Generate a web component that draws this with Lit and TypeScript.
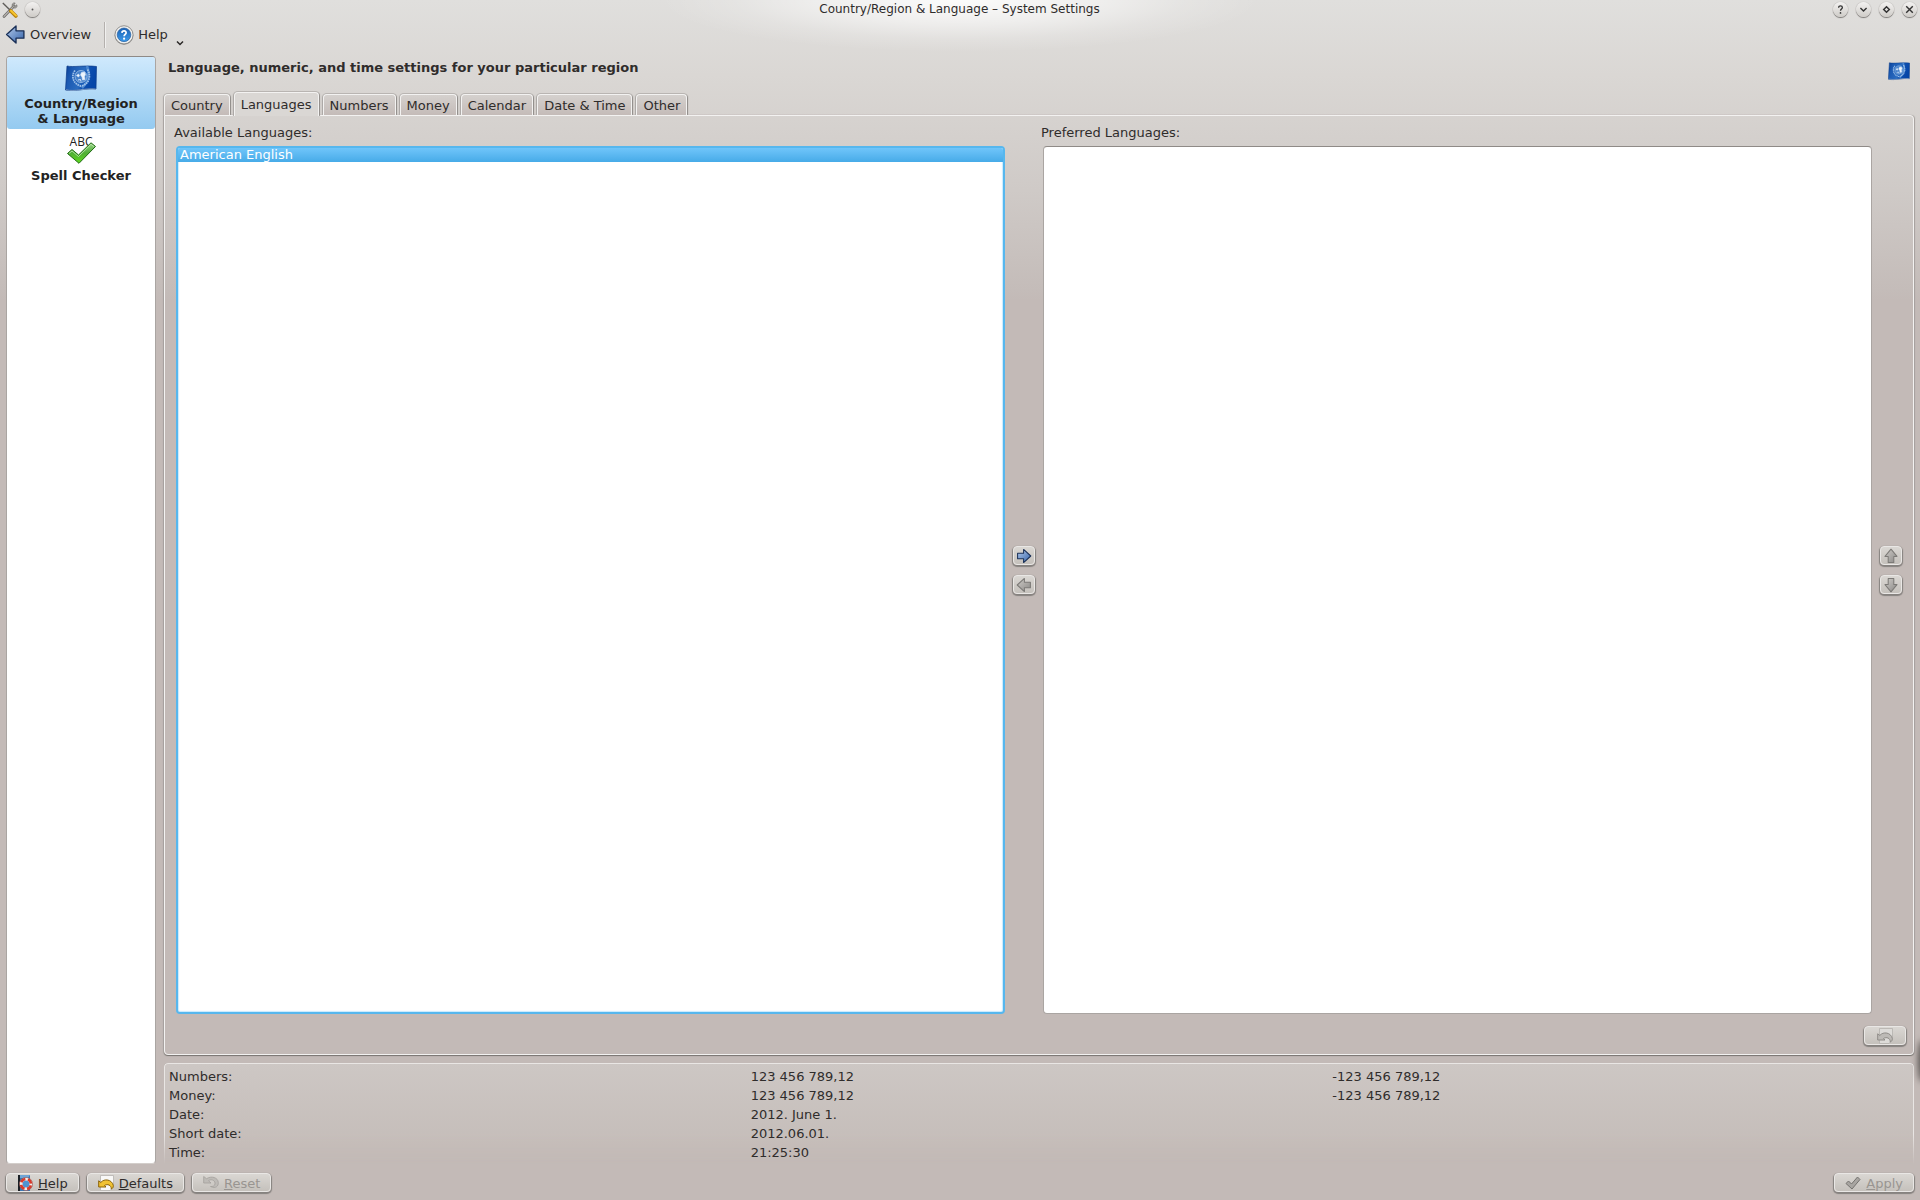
import { LitElement, html, svg, css } from "lit";
import { customElement, property } from "lit/decorators.js";

const flagIcon = (size: number) => html`<svg width=${size} height=${size} viewBox="0 0 32 32" aria-hidden="true">
  <defs>
    <linearGradient id="flag" x1="0" y1="0" x2="1" y2="0.3">
      <stop offset="0" stop-color="#0a3f96" />
      <stop offset=".25" stop-color="#1c5ab2" />
      <stop offset=".6" stop-color="#2a6cc0" />
      <stop offset=".75" stop-color="#0d4fb0" />
      <stop offset="1" stop-color="#0646a8" />
    </linearGradient>
  </defs>
  <path d="M2 4C8 5.500 20 3 31.500 4.500L31 27C24 25.500 10 30 0.500 28Z" fill="url(#flag)" stroke="#0b3a86" stroke-width=".7" />
  <path d="M22 4C25 12 23 20 17 26" fill="none" stroke="#4a86cf" stroke-width="2.500" />
  <path d="M1 27.800C10 30 20 25.800 31 27.200" fill="none" stroke="#7d9cc6" stroke-width="1" />
  <path d="M10 8.500C5.500 14 8.500 22.500 16 24C24 22.500 26.500 14 22.500 7.500" fill="none" stroke="#9fc1e9" stroke-width="1.800" stroke-dasharray="1.600 .7" />
  <circle cx="16" cy="14.500" r="6" fill="#4580ca" stroke="#8fb6e4" stroke-width="1" />
  <path d="M11.500 13.500L13.500 12L14.500 13.500L13.500 15ZM16.500 10.500L19.500 10L20.500 12.500L19.500 14.500L20 17.500L17.500 18L17 15L15.500 13Z" fill="#eef5fd" stroke="#dbe9f9" stroke-width=".6" stroke-linejoin="round" />
  <path d="M13 18L15.500 17.500L16 19.500" fill="none" stroke="#dbe9f9" stroke-width="1" />
</svg>`;

const arrowPaths: Record<string, string> = {
  right: "M2 6.500H9.500V1.800L18.500 10L9.500 18.200V13.500H2Z",
  left: "M18 6.500H10.500V1.800L1.500 10L10.500 18.200V13.500H18Z",
  up: "M6.500 18V10.500H2.500L10 1.500L17.500 10.500H13.500V18Z",
  down: "M6.500 2V9.500H2.500L10 18.500L17.500 9.500H13.500V2Z",
};

const arrowIcon = (dir: string, blue: boolean, size = 16) => {
  const id = blue ? "arrow-blue" : "arrow-grey";
  return html`<svg width=${size} height=${size} viewBox="0 0 20 20" aria-hidden="true">
    <defs>
      <linearGradient id=${id} x1="0" y1="0" x2="1" y2="1">
        <stop offset="0" stop-color=${blue ? "#b7cdec" : "#cfccc8"} />
        <stop offset="1" stop-color=${blue ? "#2f5fa8" : "#8a8886"} />
      </linearGradient>
    </defs>
    <path d=${arrowPaths[dir]} fill="url(#${id})" stroke=${blue ? "#1b3158" : "#7c7a77"} stroke-width="1.300" stroke-linejoin="round" />
  </svg>`;
};

const undoIcon = (page: boolean, color: boolean) => html`<svg width="16" height="16" viewBox="0 0 16 16" aria-hidden="true">
  ${page ? svg`<path d="M2.500 .5h13v11l-3.500 4H2.500z" fill=${color ? "#f8f8f7" : "#dddbd8"} stroke=${color ? "#b5b2ae" : "#b4b1ad"} stroke-width=".8" />` : ""}
  ${page
    ? svg`<path d="M.7 12V5.800L2.800 7.500C6 3.300 14 4.200 15.300 10.500C15.400 12.500 14.500 13.500 13.300 14C13.300 10 9.500 8.600 6.500 10.500L8 12Z" fill=${color ? "#f0c233" : "#bdbab6"} stroke=${color ? "#8a6208" : "#8f8c88"} stroke-width="1" stroke-linejoin="round" />`
    : svg`<path d="M.7 1.500V8H8L5.500 5.700C9 3.300 12.500 6 12 9C11.600 11 10 11.700 7.500 11.500C13 14 15.500 11 15.300 7.500C15 2.500 8.500 .5 3.500 3.700Z" fill="#bebbb7" stroke="#a3a09c" stroke-width=".8" stroke-linejoin="round" />`}
</svg>`;

const bookIcon = html`<svg width="16" height="16" viewBox="0 0 16 16" aria-hidden="true">
  <path d="M1 0h12v16H1z" fill="#3b78b4" />
  <path d="M1 0h2v16H1z" fill="#1b2026" />
  <path d="M3 0h10l-2 3H3z" fill="#6fa5d6" />
  <circle cx="9" cy="9" r="5" fill="#4f93d0" stroke="#f1eeec" stroke-width="3" />
  <circle cx="9" cy="9" r="5" fill="none" stroke="#d93a2b" stroke-width="2.600" stroke-dasharray="5.200 2.654" stroke-dashoffset="6.500" />
  <circle cx="9" cy="9" r="6.600" fill="none" stroke="#8e3a34" stroke-width=".5" />
</svg>`;

const helpIcon = html`<svg width="20" height="20" viewBox="0 0 22 22" aria-hidden="true">
  <defs>
    <linearGradient id="ball" x1="0" y1="0" x2="0" y2="1">
      <stop offset="0" stop-color="#1c62b4" />
      <stop offset="1" stop-color="#3d9bea" />
    </linearGradient>
  </defs>
  <circle cx="11" cy="11.500" r="10.200" fill="#8a8886" />
  <circle cx="11" cy="10.800" r="10" fill="#f0f0ef" stroke="#8b8987" stroke-width="1" />
  <circle cx="11" cy="10.800" r="7.500" fill="url(#ball)" stroke="#1d579c" stroke-width=".7" />
  <path d="M8.700 8.600C8.900 5.700 13.500 5.900 13.300 8.600C13.200 10.300 11.100 10.400 11.100 12.400" fill="none" stroke="#fff" stroke-width="1.900" />
  <circle cx="11.100" cy="15" r="1.200" fill="#fff" />
</svg>`;

const toolsIcon = html`<svg width="16" height="16" viewBox="0 0 16 16" aria-hidden="true">
  <path d="M2 14.500L12 4" stroke="#6d6b68" stroke-width="2.600" stroke-linecap="round" />
  <path d="M2 14.300L12 4" stroke="#b9b7b3" stroke-width="1.200" stroke-linecap="round" />
  <path d="M14.800 2.800L12.800 4.500L11.500 3.200L13.200 1C10.800 .4 9.600 2.400 10.300 4.500L12 6C14 6.400 15.600 5 14.800 2.800Z" fill="#a9a7a3" stroke="#6d6b68" stroke-width=".7" />
  <path d="M.8 1L8 8" stroke="#5e5c5a" stroke-width="1.400" />
  <path d="M8.800 9L13.800 14" stroke="#b47f0c" stroke-width="3.600" stroke-linecap="round" />
  <path d="M9 8.800L14 13.600" stroke="#f7c52d" stroke-width="2" stroke-linecap="round" />
</svg>`;

const tickIcon = html`<svg width="30" height="22" viewBox="0 0 30 22" aria-hidden="true">
  <defs>
    <linearGradient id="tick" x1="0" y1="0" x2="0" y2="1">
      <stop offset="0" stop-color="#9bd48a" />
      <stop offset=".5" stop-color="#4fae35" />
      <stop offset="1" stop-color="#5fdc1c" />
    </linearGradient>
  </defs>
  <path d="M1.500 11.500L6 7.500L12.500 13L25 .8L29.500 4.500L13 21.300Z" fill="url(#tick)" stroke="#1e6a12" stroke-width="1" stroke-linejoin="round" />
  <path d="M3 11.500L6 9L12.500 14.500L25 2.300L28 4.700" fill="none" stroke="#c3ecb4" stroke-width=".8" />
</svg>`;

const applyIcon = html`<svg width="16" height="16" viewBox="0 0 16 16" aria-hidden="true">
  <path d="M1 8.500L3.500 6L6.500 9L12.500 2L15 4.500L7 14Z" fill="#a8a5a1" stroke="#74726f" stroke-width="1" stroke-linejoin="round" />
</svg>`;

const windowGlyphs: Record<string, unknown> = {
  menu: svg`<circle cx="8" cy="8" r="1" fill="#555" />`,
  help: svg`<path d="M6 6C6 3.300 10 3.500 10 5.900C10 7.500 8 7.600 8 9.400" fill="none" stroke="#333" stroke-width="1.400" /><circle cx="8" cy="11.600" r=".9" fill="#333" />`,
  min: svg`<path d="M4.700 6.500L8 9.700L11.300 6.500" fill="none" stroke="#333" stroke-width="1.500" />`,
  max: svg`<path d="M8 5L11 8L8 11L5 8Z" fill="none" stroke="#333" stroke-width="1.600" />`,
  close: svg`<path d="M4.500 4.500L11.500 11.500M11.500 4.500L4.500 11.500" fill="none" stroke="#333" stroke-width="1.500" />`,
};

@customElement("window-button")
export class WindowButton extends LitElement {
  @property() kind = "menu";
  @property() label = "";

  static styles = css`
    :host { display: block; height: 15px; }
    .round {
      display: block; width: 15px; height: 15px; padding: 0; border: 0; border-radius: 50%;
      background: linear-gradient(#f3f2f1, #cfccc8);
      box-shadow: 0 1px 1px #7b7875, 0 0 1px #8b8885;
    }
    svg { display: block; width: 15px; height: 15px; }
  `;

  render() {
    return html`<button class="round" aria-label=${this.label}>
      <svg viewBox="0 0 16 16" aria-hidden="true">${windowGlyphs[this.kind]}</svg>
    </button>`;
  }
}

@customElement("app-root")
export class AppRoot extends LitElement {
  private tabs = ["Country", "Languages", "Numbers", "Money", "Calendar", "Date & Time", "Other"];

  private samples = [
    ["Numbers:", "123 456 789,12", "-123 456 789,12"],
    ["Money:", "123 456 789,12", "-123 456 789,12"],
    ["Date:", "2012. June 1.", ""],
    ["Short date:", "2012.06.01.", ""],
    ["Time:", "21:25:30", ""],
  ];

  static styles = css`
    :host {
      display: block;
      font: 13px/19px "DejaVu Sans", sans-serif;
      color: #2f2c2b;
    }
    * { box-sizing: border-box; }
    button { font: inherit; color: inherit; }
    svg { display: block; flex: none; }
    .window {
      position: relative;
      display: flex; flex-direction: column; min-height: 100vh; overflow: hidden;
      background:
        radial-gradient(ellipse 300px 52px at 50% 0, #ffffffe6, #ffffff80 45%, #ffffff2b 75%, #ffffff00) no-repeat,
        linear-gradient(#e0dfdd, #dad7d4 75px, #cfcac7 190px, #c4bcb9 290px, #c3bab7 300px);
    }
    .titlebar {
      display: grid; grid-template-columns: 1fr auto 1fr; align-items: center;
      height: 19px; padding: 0 3px 0 2px;
    }
    .title { margin: 0; font: inherit; font-size: 12px; }
    .title-left, .title-right { display: flex; align-items: center; }
    .title-left { gap: 7px; }
    .title-right { gap: 8px; justify-content: flex-end; }
    .toolbar { display: flex; align-items: center; height: 32px; padding: 0 5px; }
    .tool { display: flex; align-items: center; gap: 4px; height: 30px; padding: 0 0 1px; border: 0; background: none; }
    .tool-sep { width: 2px; height: 26px; margin: 0 8px 0 13px; background: linear-gradient(90deg, #b4b0ad 50%, #f1f0ef 50%); }
    .chevron { align-self: flex-end; margin: 0 0 2px 4px; }
    .main { flex: 1; display: flex; gap: 8px; padding: 5px 6px 0; }
    .sidebar {
      flex: none; width: 150px; border: 1px solid #aaa5a2; border-top-color: #8f8a87; border-radius: 4px;
      border-bottom-color: #d3cecb; background: #fff;
    }
    .side-item {
      display: flex; flex-direction: column; align-items: center; gap: 2px; width: 100%; height: 72px; padding: 5px 0 0;
      border-radius: 3px; font-weight: bold; line-height: 15px; text-align: center; text-decoration: none; color: #222;
    }
    .side-item.current { background: linear-gradient(#cfe9fd, #94caf0); }
    .spell { position: relative; width: 32px; height: 32px; }
    .abc { font: 12px/16px "Open Sans", "Noto Sans", sans-serif; }
    .spell svg { position: absolute; left: 1px; bottom: 2px; }
    .content { flex: 1; min-width: 0; display: flex; flex-direction: column; }
    .header { display: flex; align-items: center; justify-content: space-between; height: 36px; padding: 0 4px 14px; }
    .heading { margin: 0; font: inherit; font-weight: bold; }
    .header-flag { padding-top: 8px; }
    .tabs { display: flex; align-items: flex-end; gap: 4px; height: 23px; }
    .tab {
      height: 21px; padding: 2px 6px 0; border: 1px solid #f3f2f1; border-bottom: 0; border-radius: 4px 4px 0 0;
      background: linear-gradient(#d5d1ce, #c4bbb8); box-shadow: 0 -1px 0 #b9b5b2, 1px 0 1px #8d8986, -1px 0 1px #a9a5a2; line-height: 18px;
      clip-path: inset(-2px -2px 0 -2px);
    }
    .tab.active { height: 24px; margin-bottom: -1px; padding-bottom: 1px; background: #dad7d4; z-index: 1; }
    .panel {
      flex: 1; display: flex; flex-direction: column; padding: 7px 7px 9px 9px;
      border: 1px solid #f3f2f1; border-radius: 4px; border-top-left-radius: 0;
      box-shadow: 0 1px 1px #77736f, 1px 0 1px #aaa6a3, -1px 0 1px #aaa6a3;
    }
    .lists {
      flex: 1; display: grid; grid-template-columns: minmax(0, 1fr) 36px minmax(0, 1fr) 30px; grid-template-rows: 23px 1fr;
      margin-right: 4px;
    }
    .list { margin: 0 0 0 2px; padding: 0; list-style: none; background: #fff; border: 1px solid #aaa5a2; border-top-color: #8f8a87; border-radius: 4px; overflow: hidden; }
    .list.focused { border: 2px solid #56b7ee; box-shadow: inset 0 0 1px 1px #c7eaff; }
    .option { height: 14px; padding: 0 2px; background: linear-gradient(#70c5fa, #47abe8); color: #fff; line-height: 13px; }
    .available { grid-area: 1 / 1; }
    .preferred { grid-area: 1 / 3; }
    .list.available { grid-area: 2 / 1; }
    .list.preferred { grid-area: 2 / 3; }
    .movers { grid-area: 1 / 2 / 3 / 3; align-self: center; display: flex; flex-direction: column; gap: 10px; margin: 3px 0 0 8px; }
    .movers.order { grid-area: 1 / 4 / 3 / 5; }
    .btn {
      display: flex; align-items: center; justify-content: center; gap: 5px; height: 19px; padding: 0 10px;
      border: 1px solid #e9e7e5; border-radius: 4px; background: linear-gradient(#dad7d3, #c5c1bc);
      box-shadow: 0 1px 1px 1px #86827f;
    }
    .btn:disabled { color: #999591; }
    .btn.small { width: 22px; padding: 0; }
    .panel-foot { display: flex; justify-content: flex-end; padding-top: 12px; }
    .btn.undo { width: 42px; padding: 0; }
    .samples { position: relative; margin-top: 8px; padding: 4px 0 2px 5px; }
    .samples::before {
      content: ""; position: absolute; inset: 0; border: 1px solid #e9e6e4; border-bottom: 0; border-radius: 4px 4px 0 0;
      background: linear-gradient(#cdc7c4, #c3bbb7); box-shadow: 0 -1px 1px #aba7a4, 1px 0 1px #99958f, -1px 0 1px #aba7a4;
      mask-image: linear-gradient(#000 70%, transparent);
    }
    .preview { position: relative; width: 100%; table-layout: fixed; border-spacing: 0; }
    .preview th, .preview td { padding: 0; height: 19px; font-weight: normal; text-align: left; }
    .footer { display: flex; align-items: center; gap: 8px; padding: 9px 6px 8px; }
    .footer .btn { padding-top: 1px; }
    .spacer { flex: 1; }
    .edge-glow { position: absolute; right: -6px; bottom: 118px; width: 8px; height: 42px; border-radius: 50%; background: #56524f; filter: blur(3px); }
  `;

  render() {
    return html`<div class="window">
      <header class="titlebar">
        <div class="title-left">${toolsIcon}<window-button kind="menu" label="Window menu"></window-button></div>
        <h1 class="title">Country/Region &amp; Language – System Settings</h1>
        <div class="title-right">
          <window-button kind="help" label="Help"></window-button>
          <window-button kind="min" label="Minimize"></window-button>
          <window-button kind="max" label="Maximize"></window-button>
          <window-button kind="close" label="Close"></window-button>
        </div>
      </header>
      <nav class="toolbar">
        <button class="tool">${arrowIcon("left", true, 21)}Overview</button>
        <span class="tool-sep"></span>
        <button class="tool">${helpIcon}Help
          <svg class="chevron" width="8" height="8" viewBox="0 0 8 8" aria-hidden="true"><path d="M1 2.500L4 5.500L7 2.500" fill="none" stroke="#2a2827" stroke-width="1.500" /></svg>
        </button>
      </nav>
      <div class="main">
        <nav class="sidebar">
          <a class="side-item current" href="#region">${flagIcon(32)}<span>Country/Region<br />&amp; Language</span></a>
          <a class="side-item" href="#spelling"><span class="spell"><span class="abc">ABC</span>${tickIcon}</span><span>Spell Checker</span></a>
        </nav>
        <main class="content">
          <div class="header">
            <h2 class="heading">Language, numeric, and time settings for your particular region</h2>
            <span class="header-flag">${flagIcon(22)}</span>
          </div>
          <div class="tabs" role="tablist">
            ${this.tabs.map((tab) => html`<button class="tab ${tab === "Languages" ? "active" : ""}" role="tab" aria-selected=${tab === "Languages"}>${tab}</button>`)}
          </div>
          <section class="panel" role="tabpanel">
            <div class="lists">
              <span class="available" id="available">Available Languages:</span>
              <ul class="list focused available" role="listbox" aria-labelledby="available">
                <li class="option" role="option" aria-selected="true">American English</li>
              </ul>
              <div class="movers">
                <button class="btn small" aria-label="Add">${arrowIcon("right", true)}</button>
                <button class="btn small" aria-label="Remove" disabled>${arrowIcon("left", false)}</button>
              </div>
              <span class="preferred" id="preferred">Preferred Languages:</span>
              <ul class="list preferred" role="listbox" aria-labelledby="preferred"></ul>
              <div class="movers order">
                <button class="btn small" aria-label="Move up" disabled>${arrowIcon("up", false)}</button>
                <button class="btn small" aria-label="Move down" disabled>${arrowIcon("down", false)}</button>
              </div>
            </div>
            <div class="panel-foot">
              <button class="btn undo" aria-label="Use defaults" disabled>${undoIcon(true, false)}</button>
            </div>
          </section>
          <div class="samples">
            <table class="preview">
              ${this.samples.map(([name, a, b]) => html`<tr><th scope="row">${name}</th><td>${a}</td><td>${b}</td></tr>`)}
            </table>
          </div>
        </main>
      </div>
      <footer class="footer">
        <button class="btn">${bookIcon}<span><u>H</u>elp</span></button>
        <button class="btn">${undoIcon(true, true)}<span><u>D</u>efaults</span></button>
        <button class="btn" disabled>${undoIcon(false, false)}<span><u>R</u>eset</span></button>
        <span class="spacer"></span>
        <button class="btn" disabled>${applyIcon}<span><u>A</u>pply</span></button>
      </footer>
      <span class="edge-glow"></span>
    </div>`;
  }
}
